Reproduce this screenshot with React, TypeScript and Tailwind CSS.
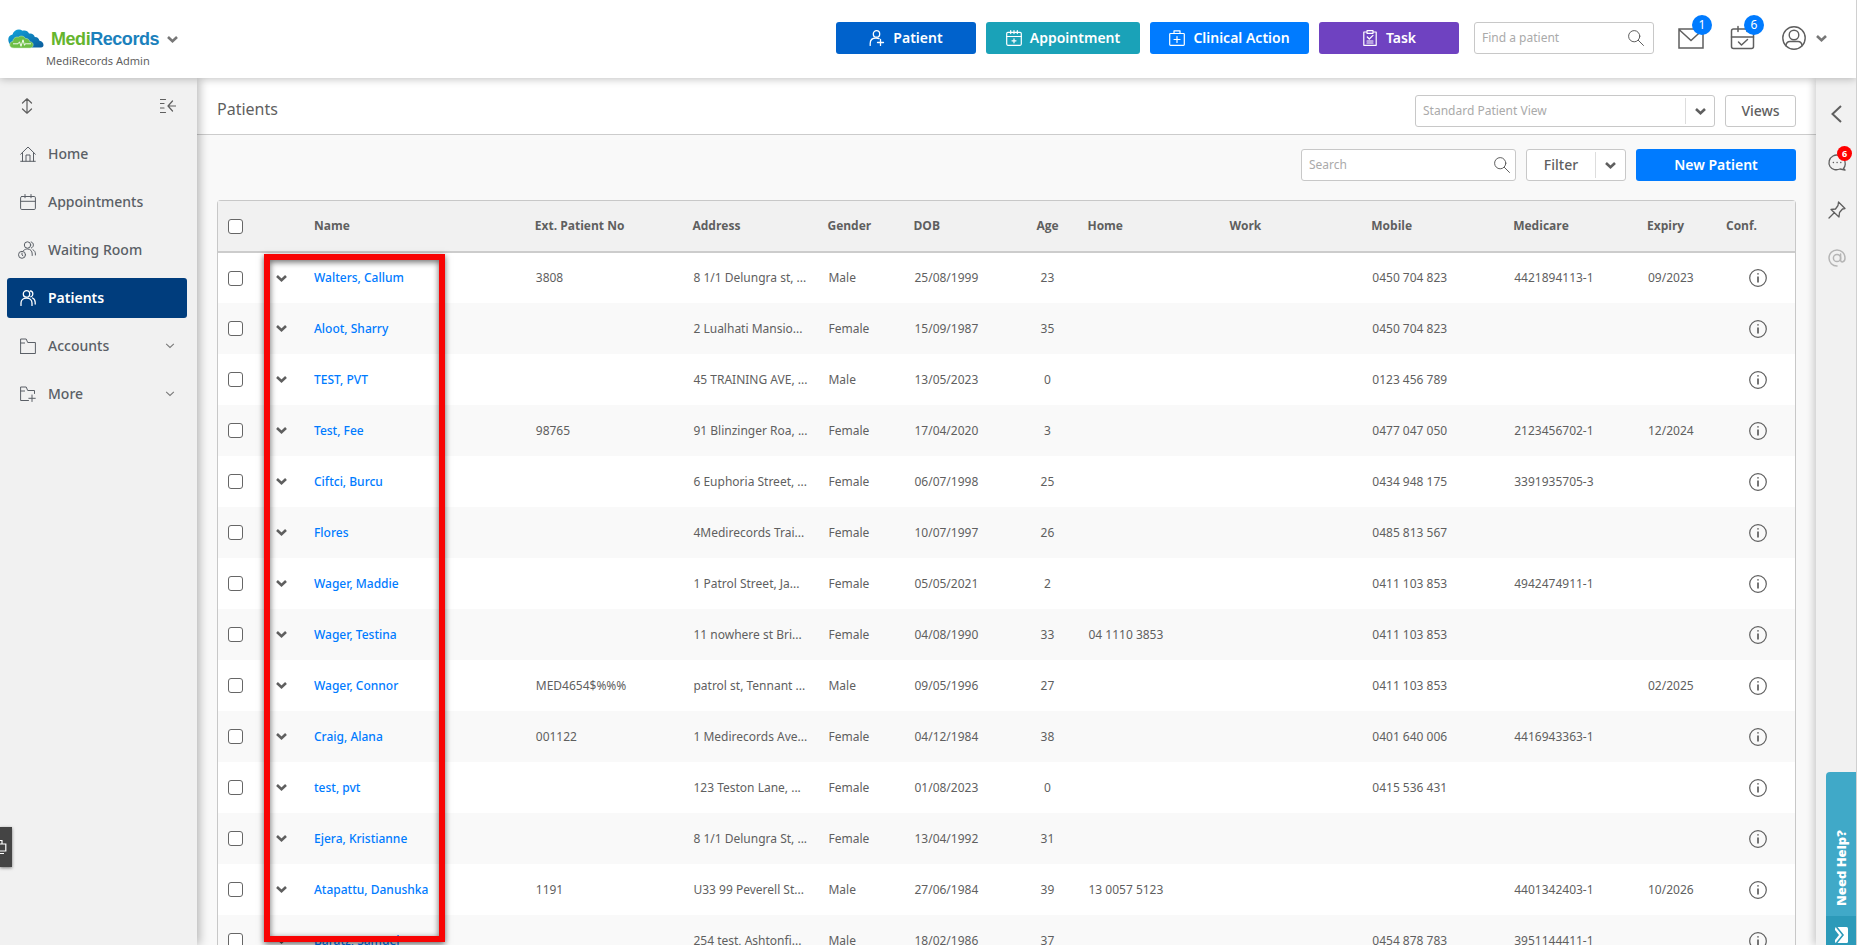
import { useState } from 'react';
import type { ReactNode } from 'react';

interface Patient {
  name: string;
  extNo?: string;
  address: string;
  gender: string;
  dob: string;
  age: number;
  home?: string;
  work?: string;
  mobile?: string;
  medicare?: string;
  expiry?: string;
}

const patients: Patient[] = [
  { name: 'Walters, Callum', extNo: '3808', address: '8 1/1 Delungra st, ...', gender: 'Male', dob: '25/08/1999', age: 23, mobile: '0450 704 823', medicare: '4421894113-1', expiry: '09/2023' },
  { name: 'Aloot, Sharry', address: '2 Lualhati Mansio...', gender: 'Female', dob: '15/09/1987', age: 35, mobile: '0450 704 823' },
  { name: 'TEST, PVT', address: '45 TRAINING AVE, ...', gender: 'Male', dob: '13/05/2023', age: 0, mobile: '0123 456 789' },
  { name: 'Test, Fee', extNo: '98765', address: '91 Blinzinger Roa, ...', gender: 'Female', dob: '17/04/2020', age: 3, mobile: '0477 047 050', medicare: '2123456702-1', expiry: '12/2024' },
  { name: 'Ciftci, Burcu', address: '6 Euphoria Street, ...', gender: 'Female', dob: '06/07/1998', age: 25, mobile: '0434 948 175', medicare: '3391935705-3' },
  { name: 'Flores', address: '4Medirecords Trai...', gender: 'Female', dob: '10/07/1997', age: 26, mobile: '0485 813 567' },
  { name: 'Wager, Maddie', address: '1 Patrol Street, Ja...', gender: 'Female', dob: '05/05/2021', age: 2, mobile: '0411 103 853', medicare: '4942474911-1' },
  { name: 'Wager, Testina', address: '11 nowhere st Bri...', gender: 'Female', dob: '04/08/1990', age: 33, home: '04 1110 3853', mobile: '0411 103 853' },
  { name: 'Wager, Connor', extNo: 'MED4654$%%%', address: 'patrol st, Tennant ...', gender: 'Male', dob: '09/05/1996', age: 27, mobile: '0411 103 853', expiry: '02/2025' },
  { name: 'Craig, Alana', extNo: '001122', address: '1 Medirecords Ave...', gender: 'Female', dob: '04/12/1984', age: 38, mobile: '0401 640 006', medicare: '4416943363-1' },
  { name: 'test, pvt', address: '123 Teston Lane, ...', gender: 'Female', dob: '01/08/2023', age: 0, mobile: '0415 536 431' },
  { name: 'Ejera, Kristianne', address: '8 1/1 Delungra St, ...', gender: 'Female', dob: '13/04/1992', age: 31 },
  { name: 'Atapattu, Danushka', extNo: '1191', address: 'U33 99 Peverell St...', gender: 'Male', dob: '27/06/1984', age: 39, home: '13 0057 5123', medicare: '4401342403-1', expiry: '10/2026' },
  { name: 'Baratz, Samuel', address: '254 test, Ashtonfi...', gender: 'Male', dob: '18/02/1986', age: 37, mobile: '0454 878 783', medicare: '3951144411-1' },
];

interface IconProps {
  className?: string;
  children: ReactNode;
  box?: number;
  width?: number;
}

function Icon({ className = 'size-4', children, box = 16, width = 1 }: IconProps) {
  return (
    <svg
      className={`shrink-0 ${className}`}
      viewBox={`0 0 ${box} ${box}`}
      fill="none"
      stroke="currentColor"
      strokeWidth={width}
      strokeLinecap="round"
      strokeLinejoin="round"
      aria-hidden="true"
    >
      {children}
    </svg>
  );
}

function Chevron({ className = 'h-[7px] w-[11px]', width = 2.6 }: { className?: string; width?: number }) {
  return (
    <svg className={`shrink-0 ${className}`} viewBox="0 0 11 7" fill="none" stroke="currentColor" strokeWidth={width} aria-hidden="true">
      <path d="M1 1l4.500 4.200L10 1" />
    </svg>
  );
}

function SearchIcon() {
  return (
    <Icon>
      <circle cx="6.200" cy="6.200" r="5.600" />
      <path d="M10.300 10.300l5.200 5.200" />
    </Icon>
  );
}

function LogoMark() {
  return (
    <svg className="h-5 w-9 shrink-0" viewBox="0 0 36 20" aria-hidden="true">
      <defs>
        <linearGradient id="cloud" x1="0" y1="0" x2="1" y2="1">
          <stop offset="0" stopColor="#12a5dc" />
          <stop offset="1" stopColor="#0b5c9c" />
        </linearGradient>
      </defs>
      <path
        d="M2 15.500C-1 11 0 6.500 4.500 5.500 6 1 11-.800 14.500 1.800c2.500-.800 5.500 0 6.500 2.700 3-.500 5 1 5.800 3.500 3 0 4 1.500 4.700 3.800 2.500.500 4 2.200 4 4.200 0 1.500-.800 2.500-2.500 2.500H22z"
        fill="url(#cloud)"
      />
      <path
        d="M6 19c-3.200 0-4.500-1.800-4.200-3.800.3-1.700 1.500-2.700 3-2.700C5 9.500 7.500 7.500 10.300 8.200c2-1.800 5.700-1.500 7 1.200 2.500-.200 4.200 1.300 4.400 3.300 2.300.100 3.700 1.600 3.500 3.400-.200 1.800-1.600 2.900-3.700 2.900z"
        fill="#6dbe45"
        stroke="#c9efb8"
        strokeWidth=".5"
      />
      <path d="M5 14.800h5l1.500-2 1.500 4.500 2-6.500 1.500 5.500 1.300-2 .8.500H23" fill="none" stroke="#fff" strokeWidth=".9" />
    </svg>
  );
}

const icons = {
  home: (
    <Icon>
      <path d="M.7 8.200L8 1l7.300 7.200M2.500 6.600v8.700M13.500 6.600v8.700M.7 15.300h14.600M6 15V9h4v6" />
    </Icon>
  ),
  appointments: (
    <Icon>
      <rect x=".6" y="2.500" width="14.800" height="13" rx="1.200" />
      <path d="M.6 7.300h14.800M5 .500v3.300M11 .500v3.300" />
    </Icon>
  ),
  waiting: (
    <Icon className="-ml-0.5 size-[18px]" box={18}>
      <circle cx="9.500" cy="4" r="3.200" />
      <path d="M5.500 9.500C7 8.300 8 8 9.500 8c3 0 4.700 2 4.700 5v1.500M13.200 1c3 .500 3 5.200.2 6M15 8.800c1.600.8 2.400 2.200 2.400 4.200v1" />
      <circle cx="4" cy="13.800" r="3.500" />
      <path d="M4 12v2l1 .800" />
    </Icon>
  ),
  patients: (
    <Icon width={1.3}>
      <circle cx="6.500" cy="3.900" r="3.200" />
      <path d="M1 15.500V13c0-3 2.300-5 5.500-5s5.500 2 5.500 5v2.500M10.300 1c3.300.200 3.300 5 .500 5.800M12.500 8c1.800.8 2.700 2.400 2.700 4.500V14" />
    </Icon>
  ),
  accounts: (
    <Icon>
      <path d="M.6 15.500V1h5.600l1.500 3.500h7.700v11H.6zM.6 5h4" />
    </Icon>
  ),
  more: (
    <Icon>
      <path d="M8.500 14.500H.6V1h5.600l1.500 3.500h6.800v3M.6 5h4M12 9v6.500M8.800 12.300h6.500" />
    </Icon>
  ),
};

const navItems = [
  { label: 'Home', icon: icons.home },
  { label: 'Appointments', icon: icons.appointments },
  { label: 'Waiting Room', icon: icons.waiting },
  { label: 'Patients', icon: icons.patients },
  { label: 'Accounts', icon: icons.accounts, expandable: true },
  { label: 'More', icon: icons.more, expandable: true },
];

const quickActions = [
  {
    label: 'Patient',
    style: 'w-[140px] bg-[#0062cc]',
    icon: (
      <Icon width={1.3}>
        <circle cx="7.500" cy="3.900" r="3.200" />
        <path d="M1.200 15.500v-2C1.200 10 3.500 8 7 8c1.300 0 2.200.2 3 .6M11.500 9.500v6M8.500 12.500h6" />
      </Icon>
    ),
  },
  {
    label: 'Appointment',
    style: 'w-[154px] bg-[#1aa2b8]',
    icon: (
      <Icon width={1.2}>
        <rect x=".7" y="2.300" width="14.600" height="13" rx="1.200" />
        <path d="M.7 6.500h14.600M4.700.600v3M8 .600v3M11.300.600v3M8 8.800v4M6 10.800h4" />
      </Icon>
    ),
  },
  {
    label: 'Clinical Action',
    style: 'w-[159px] bg-[#007bff]',
    icon: (
      <Icon width={1.2}>
        <rect x=".7" y="3.500" width="14.600" height="11.800" rx=".8" />
        <path d="M5 3.300V.800h6v2.500M8 6.500v6M5 9.500h6" />
      </Icon>
    ),
  },
  {
    label: 'Task',
    style: 'w-[140px] bg-[#6f42c1]',
    icon: (
      <Icon width={1.2}>
        <path d="M4.500 2H1.800v13.300h12.400V2h-2.700M5 .700h6v2.600H5zM5.300 7l2 2L11 5.300M5 11h6M5 13h6" />
      </Icon>
    ),
  },
];

function Header() {
  return (
    <header className="relative z-20 flex h-[78px] shrink-0 items-center justify-between bg-white pr-[29px] pl-2 shadow-[0_1px_8px_rgba(0,0,0,0.25)]">
      <div className="w-48 pt-6">
        <button type="button" className="flex items-center" aria-label="Switch practice">
          <LogoMark />
          <span className="ml-[7px] font-['Liberation_Sans'] text-[18px] leading-5 font-bold tracking-tight text-[#1b81bc]">
            <span className="text-[#65b52e]">Medi</span>Records
          </span>
          <Chevron className="ml-2 h-[7px] w-[11px] text-[#777]" />
        </button>
        <div className="ml-[38px] text-[11px] leading-6">MediRecords Admin</div>
      </div>

      <div className="flex items-center pb-0.5">
        <div className="flex gap-2.5">
          {quickActions.map((action) => (
            <button
              key={action.label}
              type="button"
              className={`flex h-8 items-center justify-center gap-2 rounded-[3px] text-sm font-semibold text-white ${action.style}`}
            >
              {action.icon}
              {action.label}
            </button>
          ))}
        </div>
        <label className="ml-[15px] flex h-8 w-[180px] items-center rounded-[3px] border border-[#c8c8c8] pr-[9px] pl-[7px]">
          <input
            type="text"
            aria-label="Find a patient"
            placeholder="Find a patient"
            className="min-w-0 flex-1 text-xs outline-none placeholder:text-[#aaa]"
          />
          <SearchIcon />
        </label>
        <div className="ml-6 flex items-center">
          <button type="button" aria-label="Messages" className="relative">
            <Icon className="size-[26px]" box={26} width={1.5}>
              <path d="M1 4h24v19H1zM1 4.500l12 11 12-11" strokeLinejoin="miter" />
            </Icon>
            <span className="absolute -top-2.5 left-3.5 size-5 rounded-full bg-[#007bff] text-xs leading-5 text-white">1</span>
          </button>
          <button type="button" aria-label="Reminders" className="relative ml-[26px]">
            <Icon className="size-[26px]" box={26} width={1.5}>
              <rect x="1.500" y="4" width="22" height="19.500" rx="2" />
              <path d="M1.500 12h22M8 1.500v5M17 1.500v5M8.500 17l3 3 6-5.500" />
            </Icon>
            <span className="absolute -top-2.5 left-3.5 size-5 rounded-full bg-[#007bff] text-xs leading-5 text-white">6</span>
          </button>
          <button type="button" aria-label="Account" className="ml-[26px] flex items-center gap-2.5">
            <Icon className="size-6" box={24} width={1.4}>
              <circle cx="12" cy="12" r="11.200" />
              <circle cx="12" cy="9" r="4.800" />
              <path d="M4 19.800c.200-3 1.500-4.300 4-4.300h8c2.500 0 3.800 1.300 4 4.300" />
            </Icon>
            <Chevron className="h-[7px] w-[11px] text-[#777]" />
          </button>
        </div>
      </div>
    </header>
  );
}

function Sidebar({ active, onSelect }: { active: string; onSelect: (label: string) => void }) {
  return (
    <aside className="relative z-10 flex w-[197px] shrink-0 flex-col bg-[#f1f1f1] px-[7px] shadow-[2px_0_10px_rgba(0,0,0,0.3)]">
      <div className="flex h-14 items-center justify-between pr-3.5 pl-3">
        <button type="button" aria-label="Expand all">
          <Icon width={1.2}>
            <path d="M8 1v14M3.500 5L8 .800 12.500 5M3.500 11L8 15.200l4.500-4.200" />
          </Icon>
        </button>
        <button type="button" aria-label="Collapse menu">
          <Icon width={1.2}>
            <path d="M0 1.500h5.500M0 5.500h4M0 10h4M0 14.500h5.500M8 8h8M12.500 3L8 8l4.500 5" />
          </Icon>
        </button>
      </div>
      <nav className="flex flex-col gap-2 pr-[3px]">
        {navItems.map((item) => (
          <a
            key={item.label}
            href="#"
            onClick={() => onSelect(item.label)}
            className={`flex h-10 items-center rounded-[3px] pr-3 pl-[13px] text-sm ${
              active === item.label ? 'bg-[#003d7d] font-semibold text-white' : 'font-medium text-[#5a5f66]'
            }`}
          >
            <span className="flex w-7">{item.icon}</span>
            <span className="flex-1">{item.label}</span>
            {item.expandable && <Chevron className="h-[6px] w-[10px] text-[#777]" width={1.2} />}
          </a>
        ))}
      </nav>
    </aside>
  );
}

function PatientTable() {
  const head = "text-left font-['Open_Sans'] font-bold";
  return (
    <div className="relative rounded-t-[4px] border border-b-0 border-[#c8c8c8] bg-white">
      <table className="w-full table-fixed text-xs whitespace-nowrap">
        <colgroup>
          <col className="w-[45px]" />
          <col className="w-[51px]" />
          <col className="w-[14%]" />
          <col className="w-[10%]" />
          <col className="w-[135px]" />
          <col className="w-[86px]" />
          <col className="w-[123px]" />
          <col className="w-[51px]" />
          <col className="w-[9%]" />
          <col className="w-[9%]" />
          <col className="w-[9%]" />
          <col />
          <col className="w-[79px]" />
          <col className="w-[69px]" />
        </colgroup>
        <thead>
          <tr className="h-[51px] border-b-2 border-[#ccc] bg-[#f1f1f1]">
            <th className="pl-2.5">
              <input type="checkbox" aria-label="Select all" className="block size-[15px] appearance-none rounded-[3px] border border-[#666] bg-white" />
            </th>
            <th aria-label="Expand" />
            <th className={head}>Name</th>
            <th className={head}>Ext. Patient No</th>
            <th className={head}>Address</th>
            <th className={head}>Gender</th>
            <th className={head}>DOB</th>
            <th className={head}>Age</th>
            <th className={head}>Home</th>
            <th className={head}>Work</th>
            <th className={head}>Mobile</th>
            <th className={head}>Medicare</th>
            <th className={head}>Expiry</th>
            <th className={head}>Conf.</th>
          </tr>
        </thead>
        <tbody>
          {patients.map((p) => (
            <tr key={p.name} className="h-[51px] even:bg-[#f9f9f9]">
              <td className="pl-2.5">
                <input type="checkbox" aria-label={`Select ${p.name}`} className="block size-[15px] appearance-none rounded-[3px] border border-[#666] bg-white" />
              </td>
              <td className="pl-[13px]">
                <button type="button" aria-label={`Actions for ${p.name}`} className="block">
                  <Chevron />
                </button>
              </td>
              <td>
                <a href="#" className="font-medium text-[#007bff]">{p.name}</a>
              </td>
              <td className="pl-px">{p.extNo}</td>
              <td className="pl-px">{p.address}</td>
              <td className="pl-px">{p.gender}</td>
              <td className="pl-px">{p.dob}</td>
              <td>
                <span className="inline-block w-[22px] text-center">{p.age}</span>
              </td>
              <td className="pl-px">{p.home}</td>
              <td className="pl-px">{p.work}</td>
              <td className="pl-px">{p.mobile}</td>
              <td className="pl-px">{p.medicare}</td>
              <td className="pl-px">{p.expiry}</td>
              <td className="pl-[23px]">
                <button type="button" aria-label={`Details for ${p.name}`} className="block">
                  <Icon className="size-[18px]" box={18} width={1.2}>
                    <circle cx="9" cy="9" r="8.300" />
                    <path d="M9 7.500v6M9 4.300v1.200" strokeWidth="1.700" strokeLinecap="butt" />
                  </Icon>
                </button>
              </td>
            </tr>
          ))}
        </tbody>
      </table>
      {/* highlight frame around the name column */}
      <div className="pointer-events-none absolute top-[53px] left-[46px] h-[688px] w-[181px] border-[6px] border-[#f80404] shadow-[0_2px_6px_rgba(0,0,0,0.6),inset_0_2px_6px_rgba(0,0,0,0.6)]" />
    </div>
  );
}

function RightRail() {
  return (
    <aside className="relative z-10 flex w-10 shrink-0 flex-col items-center gap-6 bg-[#f1f1f1] pt-6 pl-0.5 shadow-[-2px_0_8px_rgba(0,0,0,0.2)]">
      <button type="button" aria-label="Open panel">
        <Icon className="size-6" box={24} width={2}>
          <path d="M16 4l-8.500 8L16 20" strokeLinecap="butt" strokeLinejoin="miter" />
        </Icon>
      </button>
      <button type="button" aria-label="Chat" className="relative">
        <Icon className="size-6" box={24} width={1.3}>
          <path d="M18.500 18.500c2-2 2.500-6.500.5-9.500C17 5.500 12 3.800 8 6 4 8.200 3 13 5 16.500c2 3.300 6.500 4 10 2.500l5 1z" />
          <path d="M8.300 12.500h.2M12 12.500h.2M15.700 12.500h.2" />
        </Icon>
        <span className="absolute -top-1 left-3 size-[15px] rounded-full bg-[#f00] text-[9px] leading-[15px] font-bold text-white">6</span>
      </button>
      <button type="button" aria-label="Pinned">
        <Icon className="size-6" box={24} width={1.3}>
          <path d="M13.500 4l6.500 6.500-2.500.5-3 3.500-.5 4.500L6 11.500l4.500-.5L13 7.500zM9.500 14.500L4 20" />
        </Icon>
      </button>
      <button type="button" aria-label="Mentions" className="text-[#b5b5b5]">
        <Icon className="size-6" box={24} width={1.5}>
          <circle cx="12" cy="12" r="3.600" />
          <path d="M15.600 8v6c0 3 4.400 2.500 4.400-2 0-4.500-3.500-8-8-8s-8 3.500-8 8 3.500 8 8 8" />
        </Icon>
      </button>
    </aside>
  );
}

export default function App() {
  const [active, setActive] = useState('Patients');

  return (
    <div className="relative flex h-screen flex-col overflow-hidden border-r border-[#d0d0d0] bg-[#f9f9f9] font-['Noto_Sans','Open_Sans',sans-serif] text-[#5f5f5f]">
      <Header />
      <div className="flex min-h-0 flex-1">
        <Sidebar active={active} onSelect={setActive} />

        <main className="flex min-w-0 flex-1 flex-col">
          <div className="flex h-[57px] shrink-0 items-center justify-between border-b border-[#ccc] bg-white px-5 pt-1.5">
            <h1 className="text-base">Patients</h1>
            <div className="flex gap-2.5 pt-1">
              <div className="relative">
                <select
                  aria-label="Patient view"
                  className="h-8 w-[300px] appearance-none rounded-[3px] border border-[#c8c8c8] bg-white px-[7px] text-xs text-[#aaa]"
                >
                  <option>Standard Patient View</option>
                </select>
                <span className="pointer-events-none absolute inset-y-[3px] right-0 flex w-[30px] items-center justify-center border-l border-[#ddd]">
                  <Chevron />
                </span>
              </div>
              <button type="button" className="h-8 w-[71px] rounded-[3px] border border-[#c8c8c8] bg-white text-sm font-medium">
                Views
              </button>
            </div>
          </div>

          <div className="flex shrink-0 justify-end gap-2.5 px-5 pt-3.5 pb-[19px]">
            <label className="flex h-8 w-[215px] items-center rounded-[3px] border border-[#c8c8c8] bg-white px-[5px]">
              <input type="text" aria-label="Search" placeholder="Search" className="min-w-0 flex-1 pl-0.5 text-xs outline-none placeholder:text-[#aaa]" />
              <SearchIcon />
            </label>
            <div className="flex h-8 w-[100px] rounded-[3px] border border-[#c8c8c8] bg-white">
              <button type="button" className="flex-1 text-sm font-medium">
                Filter
              </button>
              <button type="button" aria-label="Filter options" className="my-0.5 flex w-[30px] items-center justify-center border-l border-[#ddd]">
                <Chevron />
              </button>
            </div>
            <button type="button" className="h-8 w-40 rounded-[3px] bg-[#007bff] text-sm font-semibold text-white">
              New Patient
            </button>
          </div>

          <div className="px-5">
            <PatientTable />
          </div>
        </main>

        <RightRail />
      </div>

      <button
        type="button"
        aria-label="Remote session"
        className="absolute bottom-[78px] left-0 z-30 flex h-10 w-3 items-center bg-[#444] text-white shadow-[0_1px_3px_rgba(0,0,0,0.5)]"
      >
        <svg className="h-4 w-[7px]" viewBox="0 0 7 16" fill="none" stroke="currentColor" strokeWidth="1.200" aria-hidden="true">
          <path d="M0 1.500h2v3M0 5h5.800v7H0M0 14.500h4" />
        </svg>
      </button>

      <a href="#" className="absolute right-0 bottom-0 z-30 flex h-[173px] w-[30px] flex-col overflow-hidden rounded-tl-[4px] bg-[#40a9c8] text-white">
        <span className="flex flex-1 rotate-180 items-center pt-2.5 text-[13px] leading-[30px] font-black [writing-mode:vertical-rl]">
          Need Help?
        </span>
        <span className="flex h-[29px] items-center justify-center bg-[#2c9ab9] pt-2">
          <svg className="h-4 w-[13px]" viewBox="0 0 13 16" aria-hidden="true">
            <rect width="13" height="16" rx="1.500" fill="#fff" />
            <path d="M1.500 0L8 8l-6.500 8" fill="none" stroke="#2c9ab9" strokeWidth="1.600" />
            <path d="M0 3v10l4-5z" fill="#2c9ab9" />
          </svg>
        </span>
      </a>
    </div>
  );
}
